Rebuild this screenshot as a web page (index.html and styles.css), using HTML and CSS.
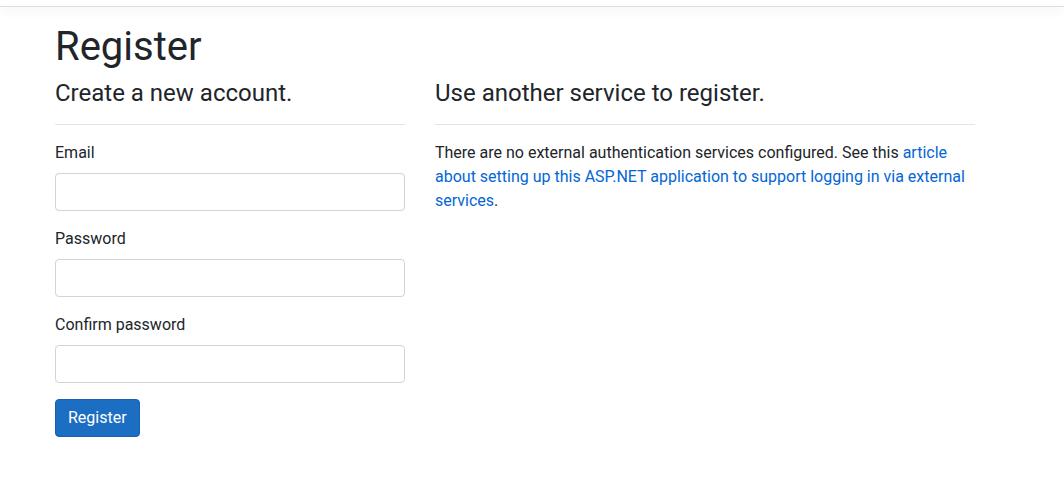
FILE: index.html
```html
<!DOCTYPE html>
<html lang="en">
<head>
<meta charset="utf-8">
<title>Register</title>
<link rel="stylesheet" href="styles.css">
</head>
<body>
<header class="navbar"></header>
<main class="container">
  <h1 class="title">Register</h1>
  <div class="row">
    <div class="col-left">
      <form class="form">
        <h4 class="subtitle">Create a new account.</h4>
        <hr class="divider">
        <div class="form-group">
          <label class="label" for="email">Email</label>
          <input class="input" id="email" type="email">
        </div>
        <div class="form-group">
          <label class="label" for="pw">Password</label>
          <input class="input" id="pw" type="password">
        </div>
        <div class="form-group">
          <label class="label" for="cpw">Confirm password</label>
          <input class="input" id="cpw" type="password">
        </div>
        <button class="btn" type="button">Register</button>
      </form>
    </div>
    <div class="col-right">
      <section>
        <h4 class="subtitle">Use another service to register.</h4>
        <hr class="divider">
        <p class="text">There are no external authentication services configured. See this <a class="link" href="#">article
          about setting up this ASP.NET application to support logging in via external
          services</a>.</p>
      </section>
    </div>
  </div>
</main>
</body>
</html>
```
FILE: styles.css
```css
* { box-sizing: border-box; }
html, body { margin: 0; padding: 0; overflow: hidden; }
body {
  font-family: Roboto, "Liberation Sans", sans-serif;
  font-size: 16px;
  line-height: 1.5;
  color: #212529;
  background: #fff;
}
.navbar {
  height: 7px;
  border-bottom: 1px solid #dedce6;
  box-shadow: 0 4px 12px rgba(0,0,0,0.05);
  margin-bottom: 16px;
}
.container { padding-left: 55px; }
.title {
  font-size: 40px;
  font-weight: 400;
  line-height: 1.2;
  margin: 0 0 8px;
}
.row { display: flex; gap: 30px; }
.col-left { width: 350px; }
.col-right { width: 540px; }
.form { margin: 0; }
.subtitle {
  font-size: 24px;
  font-weight: 400;
  line-height: 1.2;
  margin: 0 0 8px;
}
.divider {
  border: 0;
  border-top: 1px solid rgba(0,0,0,0.1);
  margin: 16px 0;
  height: 0;
}
.form-group { margin-bottom: 16px; }
.label { display: inline-block; margin-bottom: 8px; }
.input {
  display: block;
  width: 100%;
  height: 38px;
  padding: 6px 12px;
  font: inherit;
  border: 1px solid #ced4da;
  border-radius: 4px;
  background: #fff;
}
.btn {
  font: inherit;
  line-height: 1.5;
  color: #fff;
  background: #1b6ec2;
  border: 1px solid #1861ac;
  border-radius: 4px;
  padding: 6px 12px;
}
.text { margin: 0 0 16px; }
.link { color: #0366d6; text-decoration: none; }
```
